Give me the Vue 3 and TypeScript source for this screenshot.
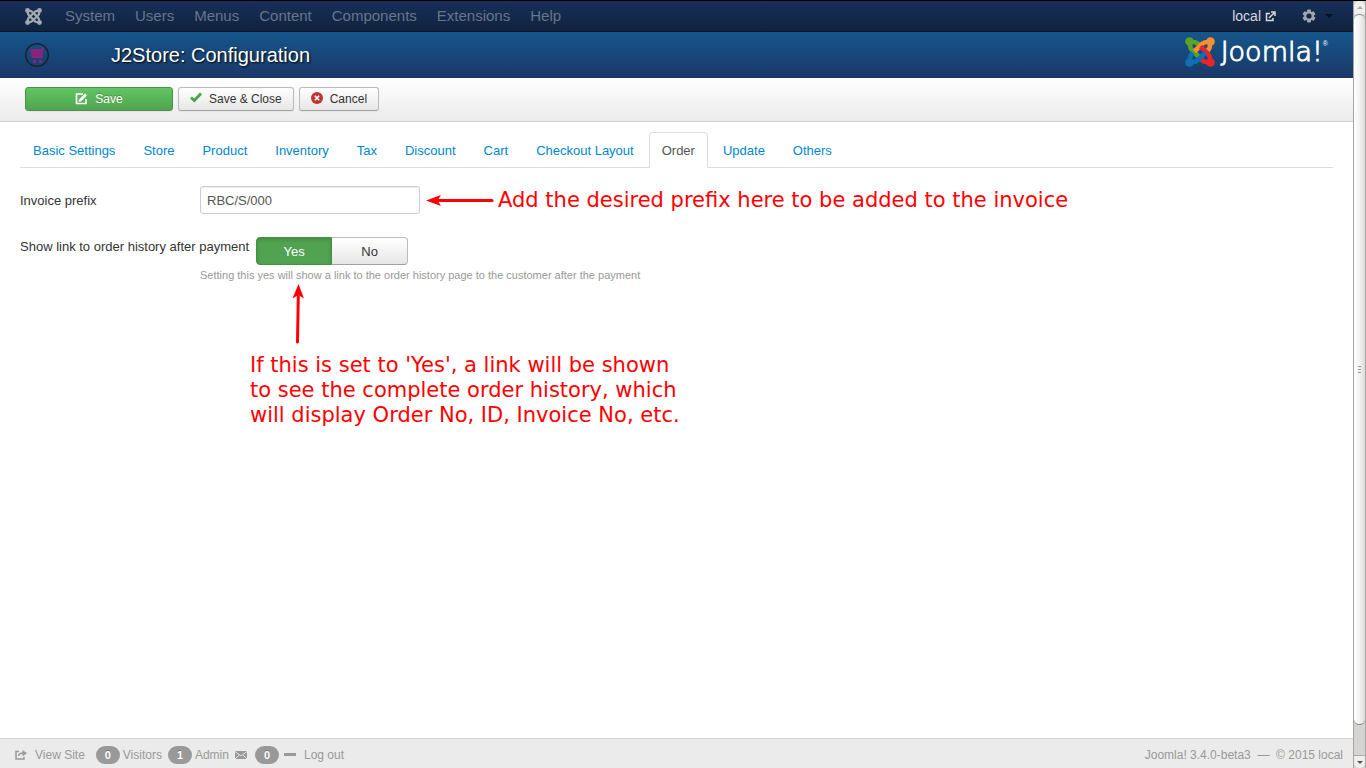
<script setup lang="ts">
import { ref } from 'vue'

const menus = ['System', 'Users', 'Menus', 'Content', 'Components', 'Extensions', 'Help']
const tabs = [
  'Basic Settings', 'Store', 'Product', 'Inventory', 'Tax', 'Discount',
  'Cart', 'Checkout Layout', 'Order', 'Update', 'Others',
]
const activeTab = ref('Order')
const prefix = ref('RBC/S/000')
const showLink = ref('yes')

const arms = [
  { color: '#5ba12a', turn: 0 },
  { color: '#f8902c', turn: 90 },
  { color: '#e8262a', turn: 180 },
  { color: '#0f6fb4', turn: 270 },
]
</script>

<template>
  <div class="window">
    <div class="page">
      <nav class="navbar">
        <a class="brand" href="#" aria-label="Control panel">
          <svg width="17" height="17" viewBox="0 0 30 30">
            <g v-for="arm in arms" :key="arm.turn" :transform="`rotate(${arm.turn} 15 15)`">
              <circle cx="4.500" cy="4.500" r="4.300" fill="#a3a9b3" />
              <path d="M5 5V8Q5 11 7 13L15 21M5 5H8Q11 5 12.500 6.500L14 8" fill="none" stroke="#a3a9b3" stroke-width="4" />
            </g>
          </svg>
        </a>
        <ul class="menu">
          <li v-for="m in menus" :key="m"><a href="#">{{ m }}</a></li>
        </ul>
        <a class="site" href="#">local
          <svg width="11" height="11" viewBox="0 0 11 11" fill="none" stroke="#d9d9d9" stroke-width="1.500">
            <path d="M5 2.500H1.500V9.500H8V7M4 7L9 2M6 1H10V5" />
          </svg>
        </a>
        <button class="gear" type="button" aria-label="User menu">
          <svg width="14" height="14" viewBox="0 0 14 14">
            <g fill="#a0a6b0">
              <rect v-for="a in [0, 60, 120]" :key="a" x="5" y="0.500" width="4" height="13" rx="1" :transform="`rotate(${a} 7 7)`" />
            </g>
            <circle cx="7" cy="7" r="3.700" fill="#14264a" stroke="#a0a6b0" stroke-width="2.200" />
          </svg>
          <span class="caret"></span>
        </button>
      </nav>

      <header class="header">
        <svg class="cart" width="24" height="24" viewBox="0 0 24 24">
          <circle cx="12" cy="12" r="11.300" fill="none" stroke="#17222e" stroke-width="1.400" />
          <path d="M5 6.500L16 6L17 4.500H19V5.500H18L17.500 15H7.500L7 13.500Z" fill="#97207c" />
          <path d="M5.500 9H17.500M6 12H17M8.500 6.500L9.500 15M12 6V15M15 6L14.500 15" stroke="#6a2a78" stroke-width=".4" />
          <rect x="8" y="17" width="3" height="3" rx="1" fill="#97207c" />
          <rect x="14" y="17" width="3" height="3" rx="1" fill="#97207c" />
        </svg>
        <h1>J2Store: Configuration</h1>
        <a class="logo" href="#" aria-label="Joomla!">
          <svg width="30" height="30" viewBox="0 0 30 30">
            <g v-for="arm in arms" :key="arm.turn" :transform="`rotate(${arm.turn} 15 15)`">
              <circle cx="4.500" cy="4.500" r="4.300" :fill="arm.color" />
              <path d="M5 5V8Q5 11 7 13L14.500 20.500M5 5H8Q11 5 12.500 6.500L14 8" fill="none" :stroke="arm.color" stroke-width="4.600" />
            </g>
          </svg>
          <span class="wordmark">Joomla!</span><span class="reg">®</span>
        </a>
      </header>

      <div class="toolbar">
        <button class="btn save" type="button">
          <svg width="13" height="13" viewBox="0 0 13 13" fill="none" stroke="#fff">
            <path d="M8 2H1.500V11.500H11V7" stroke-width="1.600" />
            <path d="M5 8.500L11 2.500" stroke-width="2.600" />
            <path d="M3.500 10L4.200 7.200L6.400 9.300Z" fill="#fff" stroke="none" />
          </svg>
          Save
        </button>
        <button class="btn" type="button">
          <svg width="12" height="12" viewBox="0 0 12 12"><path d="M1 5.500L4.300 8.500L11 1.500" fill="none" stroke="#46a546" stroke-width="2.800" /></svg>
          Save &amp; Close
        </button>
        <button class="btn" type="button">
          <svg width="12" height="12" viewBox="0 0 12 12"><circle cx="6" cy="6" r="6" fill="#bd362f" /><path d="M3.800 3.800L8.200 8.200M8.200 3.800L3.800 8.200" stroke="#fff" stroke-width="1.600" /></svg>
          Cancel
        </button>
      </div>

      <main class="content">
        <ul class="tabs">
          <li v-for="t in tabs" :key="t">
            <a href="#" :class="{ active: t === activeTab }" @click.prevent="activeTab = t">{{ t }}</a>
          </li>
        </ul>

        <form @submit.prevent>
          <div class="row">
            <label class="name" for="prefix">Invoice prefix</label>
            <input id="prefix" v-model="prefix" class="text" type="text">
            <svg class="arrow" width="68" height="12" viewBox="0 0 68 12">
              <path d="M12 6.500H66" stroke="#f00" stroke-width="3" stroke-linecap="round" />
              <path d="M0 6.500L15 1L11.500 6.500L15 12Z" fill="#f00" />
            </svg>
            <span class="note">Add the desired prefix here to be added to the invoice</span>
          </div>

          <div class="row second" role="radiogroup" aria-labelledby="history">
            <span id="history" class="name">Show link to order history after payment</span>
            <div class="switch">
              <label class="yes" :class="{ on: showLink === 'yes' }"><input v-model="showLink" type="radio" name="link" value="yes">Yes</label>
              <label class="no" :class="{ on: showLink === 'no' }"><input v-model="showLink" type="radio" name="link" value="no">No</label>
            </div>
          </div>
          <p class="help">Setting this yes will show a link to the order history page to the customer after the payment</p>
        </form>

        <div class="callout">
          <svg width="12" height="60" viewBox="0 0 12 60">
            <path d="M6.300 12L5.500 58" stroke="#f00" stroke-width="3" stroke-linecap="round" />
            <path d="M6.500 0L12 14.500L6.300 11L0.500 14.500Z" fill="#f00" />
          </svg>
          <p class="note">If this is set to 'Yes', a link will be shown<br>to see the complete order history, which<br>will display Order No, ID, Invoice No, etc.</p>
        </div>
      </main>

      <footer class="status">
        <a class="view" href="#">
          <svg width="12" height="10" viewBox="0 0 12 10" fill="none" stroke="#999" stroke-width="1.500">
            <path d="M4 1.500H1V9H9V7M3.500 6Q4 3 8 3" /><path d="M7.500 0L12 3.200L7.500 6.400Z" fill="#999" stroke="none" />
          </svg>
          View Site
        </a>
        <span class="badge">0</span><span class="word">Visitors</span>
        <span class="badge">1</span><span class="word">Admin</span>
        <svg width="12" height="8" viewBox="0 0 12 8"><rect width="12" height="8" fill="#999" /><path d="M0 .500L6 5L12 .500M0 8L4.200 4M12 8L7.800 4" fill="none" stroke="#ebebeb" stroke-width=".9" /></svg>
        <span class="badge after-mail">0</span>
        <a class="logout" href="#"><span class="dash"></span>Log out</a>
        <span class="version">Joomla! 3.4.0-beta3 &nbsp;—&nbsp; © 2015 local</span>
      </footer>
    </div>

    <div class="scrollbar" aria-hidden="true">
      <div class="step up"><i></i></div>
      <div class="thumb"><b></b><b></b><b></b></div>
      <div class="track"></div>
      <div class="step down"><i></i></div>
    </div>
  </div>
</template>

<style>
body { margin: 0; background: #fff; }
</style>

<style scoped>
* { box-sizing: border-box; }
.window {
  display: flex;
  min-height: 100vh;
  border-top: 1px solid #000;
  font: 13px/18px "Liberation Sans", Arial, sans-serif;
  color: #333;
}
.page { flex: 1; min-width: 0; display: flex; flex-direction: column; }
a { color: #08c; text-decoration: none; }
ul { list-style: none; margin: 0; padding: 0; display: flex; }
svg { flex: none; display: block; }

.navbar {
  display: flex;
  align-items: center;
  height: 31px;
  padding: 0 20px 0 25px;
  background: linear-gradient(#17305a, #10223e);
  border-bottom: 1px solid #0b1529;
  font-size: 15px;
}
.brand { margin-right: 23px; }
.menu { gap: 20px; flex: 1; }
.menu a { color: #6b7585; }
.site { display: flex; align-items: center; gap: 4px; color: #d9d9d9; font-size: 14px; }
.gear { display: flex; align-items: center; gap: 9px; margin-left: 26px; padding: 0; border: 0; background: none; }
.caret { border: 4px solid transparent; border-top-color: #08101d; border-bottom: 0; }

.header {
  display: flex;
  align-items: center;
  height: 46px;
  padding: 0 25px;
  background: linear-gradient(#15568b, #1a3867);
}
.header h1 {
  flex: 1;
  margin: 0 0 0 62px;
  font-size: 20px;
  line-height: 24px;
  font-weight: 400;
  color: #fff;
  text-shadow: 1px 1px 2px #000;
}
.logo { display: flex; align-items: center; color: #fff; height: 38px; margin-bottom: 6px; }
.wordmark { margin-left: 6px; font: 200 27px/30px "DejaVu Sans", sans-serif; -webkit-text-stroke: 1px #fff; }
.reg { align-self: flex-start; font-size: 7px; line-height: 22px; }

.toolbar {
  display: flex;
  align-items: flex-start;
  gap: 5px;
  height: 44px;
  padding: 9px 25px 0;
  background: linear-gradient(#fff, #ebebeb);
  border-bottom: 1px solid #d0d0d0;
}
.btn {
  display: flex;
  align-items: center;
  justify-content: center;
  gap: 7px;
  height: 24px;
  padding: 0 11px;
  border: 1px solid #bbb;
  border-bottom-color: #a2a2a2;
  border-radius: 3px;
  background: linear-gradient(#fff, #e6e6e6);
  box-shadow: 0 1px 2px rgba(0, 0, 0, .05);
  font: 12px/18px "Liberation Sans", Arial, sans-serif;
  color: #333;
}
.btn svg { margin-bottom: 2px; }
.save {
  width: 148px;
  border-color: #499249;
  background: linear-gradient(#62c462, #51a351);
  color: #fff;
  text-shadow: 0 -1px 0 rgba(0, 0, 0, .25);
}

.content { flex: 1; padding: 10px 20px 0; }
.tabs { gap: 2px; border-bottom: 1px solid #ddd; margin-bottom: 18px; }
.tabs li { margin-bottom: -1px; }
.tabs a {
  display: block;
  padding: 9px 12px 7px;
  border: 1px solid transparent;
  border-radius: 4px 4px 0 0;
  line-height: 18px;
}
.tabs a.active { color: #555; background: #fff; border-color: #ddd; border-bottom-color: #fff; }

.row { display: flex; align-items: center; }
.name { min-width: 180px; padding-top: 1px; white-space: nowrap; }
.text {
  width: 220px;
  height: 28px;
  padding: 4px 6px;
  border: 1px solid #ccc;
  border-radius: 3px;
  box-shadow: inset 0 1px 1px rgba(0, 0, 0, .075);
  font: 13px/18px "Liberation Sans", Arial, sans-serif;
  color: #555;
}
.arrow { margin: 0 4px 0 6px; }
.note {
  margin: 0;
  font: 21px/25px "DejaVu Sans", sans-serif;
  color: #f00;
}
.second { align-items: flex-start; gap: 7px; margin-top: 23px; }
.switch { display: flex; }
.switch label {
  position: relative;
  width: 76px;
  height: 28px;
  border: 1px solid #bbb;
  border-bottom-color: #a2a2a2;
  background: linear-gradient(#fff, #e6e6e6);
  text-align: center;
  line-height: 28px;
}
.switch .yes { border-radius: 4px 0 0 4px; }
.switch .no { border-radius: 0 4px 4px 0; border-left-width: 0; }
.switch .on {
  border-color: #429042;
  background: #51a351;
  box-shadow: inset 0 2px 4px rgba(0, 0, 0, .15);
  color: #fff;
}
.switch input { position: absolute; inset: 0; margin: 0; opacity: 0; }
.help { margin: 1px 0 0 180px; font-size: 11px; color: #999; }

.callout { margin-left: 230px; }
.callout svg { margin-left: 42px; }
.callout .note { margin-top: 9px; }

.status {
  display: flex;
  align-items: center;
  height: 30px;
  padding: 2px 10px 0 15px;
  border-top: 1px solid #d4d4d4;
  background: #ebebeb;
  font-size: 12px;
  color: #999;
}
.status a { display: flex; align-items: center; color: #999; }
.view { gap: 8px; margin-right: 11px; }
.badge {
  width: 24px;
  margin-right: 3px;
  border-radius: 9px;
  background: #999;
  color: #fff;
  font-size: 11px;
  font-weight: 700;
  text-align: center;
  text-shadow: 0 -1px 0 rgba(0, 0, 0, .25);
}
.word { margin-right: 6px; }
.after-mail { margin: 0 5px 0 8px; }
.dash { width: 12px; height: 3px; margin-right: 8px; background: #999; }
.version { margin-left: auto; }

.scrollbar {
  display: flex;
  flex-direction: column;
  width: 13px;
  background: #d6d4d2;
  border-left: 1px solid #a5a5a5;
  border-right: 1px solid #a5a5a5;
}
.step { display: flex; align-items: center; justify-content: center; height: 13px; background: #f0efee; }
.up { border-radius: 6px 6px 0 0; }
.down { border-radius: 0 0 6px 6px; border-top: 1px solid #aaa; }
.step i { border: 3px solid transparent; }
.up i { border-top: 0; border-bottom-color: #aaa; }
.down i { border-bottom: 0; border-top-color: #555; }
.thumb {
  flex: 24;
  display: flex;
  flex-direction: column;
  align-items: center;
  justify-content: center;
  gap: 2px;
  border: 1px solid #888;
  border-width: 1px 0;
  border-radius: 6px;
  background: linear-gradient(90deg, #fff, #f4f3f2 50%, #dddbd9);
}
.thumb b { width: 3px; height: 1px; background: #999; }
.track { flex: 1; }
</style>
